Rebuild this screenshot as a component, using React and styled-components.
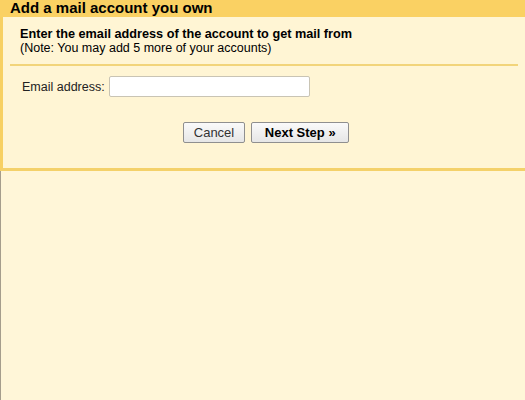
import styled, { createGlobalStyle } from 'styled-components'

const GlobalStyle = createGlobalStyle`
    html, body {
        margin: 0;
        padding: 0;
        background: #fff6d8;
    }
    body {
        font-family: "Liberation Sans", Arial, sans-serif;
    }
`

const Page = styled.div`
    min-height: 400px;
    border-left: 1px solid #a59d8c;
    background: #fff6d8;
`

const Panel = styled.div`
    margin-left: -1px;
    border-left: 3px solid #f7d062;
    border-bottom: 3px solid #f4d16a;
    background: #fff5d4;
`

const Header = styled.h1`
    margin: 0 0 0 -3px;
    height: 17px;
    padding-left: 10px;
    background: #fad163;
    font-size: 15px;
    line-height: 15px;
    font-weight: bold;
    color: #000;
    overflow: hidden;
`

const Intro = styled.div`
    margin: 0 7px 0 7px;
    padding: 10px 0 9px 10px;
    border-bottom: 2px solid #f2d47a;
    font-size: 12.5px;
    line-height: 14px;
    color: #000;
`

const Lead = styled.div`
    font-size: 12.7px;
    font-weight: bold;
`

const Body = styled.div`
    padding: 10px 0 25px 0;
`

const FieldRow = styled.div`
    display: flex;
    align-items: center;
    gap: 4px;
    padding-left: 19px;
    font-size: 12.5px;
    color: #222;
`

const Input = styled.input`
    box-sizing: border-box;
    width: 201px;
    height: 21px;
    border: 1px solid #c9c4b4;
    border-radius: 2px;
    background: #fff;
    outline: none;
`

const Actions = styled.div`
    display: flex;
    justify-content: center;
    gap: 6px;
    margin-top: 25px;
    padding-left: 4px;
`

const Button = styled.button`
    box-sizing: border-box;
    height: 21px;
    padding: 0 10px;
    min-width: ${p => (p.$primary ? '98px' : '62px')};
    border: 1px solid #8f8f8f;
    border-radius: 2px;
    background: linear-gradient(#fafafa, #e6e6e6);
    font-family: "Liberation Sans", Arial, sans-serif;
    font-size: 13px;
    font-weight: ${p => (p.$primary ? 'bold' : 'normal')};
    color: ${p => (p.$primary ? '#000' : '#333')};
    line-height: 19px;
`

const App = () => {
    return (
        <>
            <GlobalStyle />
            <Page>
                <Panel>
                    <Header>Add a mail account you own</Header>
                    <Intro>
                        <Lead>Enter the email address of the account to get mail from</Lead>
                        <div>(Note: You may add 5 more of your accounts)</div>
                    </Intro>
                    <Body>
                        <FieldRow>
                            <label htmlFor="email">Email address:</label>
                            <Input id="email" type="text" />
                        </FieldRow>
                        <Actions>
                            <Button>Cancel</Button>
                            <Button $primary>Next Step »</Button>
                        </Actions>
                    </Body>
                </Panel>
            </Page>
        </>
    )
}

export default App
